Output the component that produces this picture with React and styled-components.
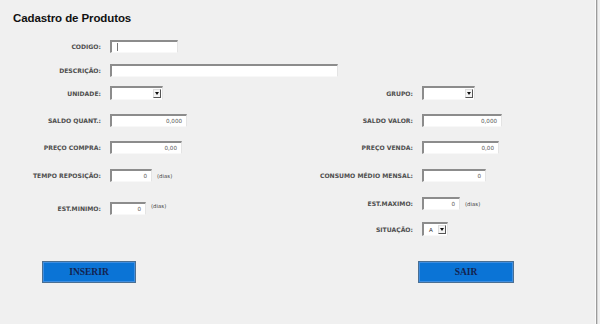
import React from "react";
import styled, { createGlobalStyle } from "styled-components";

const GlobalStyle = createGlobalStyle`
  html, body {
    margin: 0;
    padding: 0;
    background: #f0f0f0;
  }
`;

// Window frame
const Frame = styled.div`
  width: 595px;
  height: 324px;
  background: #f0f0f0;
  border-right: 1px solid #fbfbfb;
  box-shadow: 1px 0 0 #9c9c9c, 2px 0 0 #d4d4d4;
  font-family: "DejaVu Sans", Verdana, sans-serif;
  color: #3c3c3c;
  overflow: hidden;
  position: relative;
`;

const Title = styled.h1`
  margin: 0;
  padding: 12px 0 0 13px;
  height: 15px;
  font-family: "Liberation Sans", Arial, sans-serif;
  font-size: 11.5px;
  font-weight: 700;
  color: #111;
  letter-spacing: -0.1px;
`;

const Columns = styled.div`
  display: grid;
  grid-template-columns: 300px 1fr;
`;

const Column = styled.div`
  display: flex;
  flex-direction: column;
`;

const Row = styled.div`
  display: grid;
  grid-template-columns: ${(p) => p.$label}px auto;
  column-gap: 9px;
  align-items: center;
  height: 14px;
  margin-top: ${(p) => p.$top}px;
`;

const Label = styled.span`
  text-align: right;
  font-size: 6.1px;
  font-weight: 700;
  color: #4e4e4e;
  white-space: nowrap;
`;

const FieldLine = styled.div`
  display: flex;
  align-items: center;
  gap: 5px;
`;

const Input = styled.div`
  box-sizing: border-box;
  width: ${(p) => p.$w}px;
  height: 13px;
  background: #fff;
  border-top: 2px solid #8c8c8c;
  border-left: 2px solid #8c8c8c;
  border-right: 1px solid #e4e4e4;
  border-bottom: 1px solid #f8f8f8;
  display: flex;
  align-items: center;
  justify-content: ${(p) => (p.$left ? "flex-start" : "flex-end")};
  padding: 0 4px;
  font-size: 5.6px;
  color: #555;
`;

const Caret = styled.span`
  width: 1px;
  height: 8px;
  background: #777;
  margin-left: 1px;
`;

const Unit = styled.span`
  font-size: 5.4px;
  color: #444;
  margin-top: ${(p) => p.$up || 0}px;
`;

const Select = styled.div`
  box-sizing: border-box;
  width: ${(p) => p.$w}px;
  height: 14px;
  background: #fff;
  border-top: 2px solid #8c8c8c;
  border-left: 2px solid #8c8c8c;
  border-right: 1px solid #e4e4e4;
  border-bottom: 1px solid #f8f8f8;
  display: flex;
  align-items: center;
  justify-content: space-between;
  padding: 0 1px 0 5px;
  font-size: 5.6px;
  color: #333;
`;

const DropButton = styled.span`
  box-sizing: border-box;
  width: 8px;
  height: 9px;
  background: #f4f4f4;
  border-right: 1px solid #555;
  border-bottom: 1px solid #555;
  border-left: 1px solid #ddd;
  border-top: 1px solid #ddd;
  display: flex;
  align-items: center;
  justify-content: center;

  &::after {
    content: "";
    border-left: 2px solid transparent;
    border-right: 2px solid transparent;
    border-top: 3px solid #111;
  }
`;

const ButtonBar = styled.div`
  display: grid;
  grid-template-columns: 300px 1fr;
  margin-top: 24px;
`;

const Button = styled.button`
  box-sizing: border-box;
  width: ${(p) => p.$w}px;
  height: 22px;
  margin-left: ${(p) => p.$left}px;
  background: #0b74d6;
  border: 1px solid #4a6f93;
  box-shadow: inset 0 0 0 1px #3f8ee0;
  font-family: "Liberation Serif", "Times New Roman", serif;
  font-weight: 700;
  font-size: 9.5px;
  color: #14234f;
  padding: 0;
  cursor: pointer;
`;

const Field = ({ label, lw, top, w, value, unit, unitUp }) => (
  <Row $label={lw} $top={top}>
    <Label>{label}</Label>
    <FieldLine>
      <Input $w={w}>{value}</Input>
      {unit && <Unit $up={unitUp}>(dias)</Unit>}
    </FieldLine>
  </Row>
);

const Combo = ({ label, lw, top, w, value }) => (
  <Row $label={lw} $top={top}>
    <Label>{label}</Label>
    <Select $w={w}>
      <span>{value}</span>
      <DropButton />
    </Select>
  </Row>
);

export default function App() {
  return (
    <>
      <GlobalStyle />
      <Frame>
        <Title>Cadastro de Produtos</Title>

        <Row $label={101} $top={12}>
          <Label>CODIGO:</Label>
          <Input $w={68} $left>
            <Caret />
          </Input>
        </Row>
        <Field label="DESCRIÇÃO:" lw={101} top={10} w={228} value="" />

        <Columns>
          <Column>
            <Combo label="UNIDADE:" lw={101} top={9} w={53} value="" />
            <Field label="SALDO QUANT.:" lw={101} top={13} w={77} value="0,000" />
            <Field label="PREÇO COMPRA:" lw={101} top={13} w={72} value="0,00" />
            <Field label="TEMPO REPOSIÇÃO:" lw={101} top={14} w={42} value="0" unit unitUp={2} />
            <Field label="EST.MINIMO:" lw={101} top={19} w={36} value="0" unit unitUp={-4} />
          </Column>
          <Column>
            <Combo label="GRUPO:" lw={113} top={9} w={53} value="" />
            <Field label="SALDO VALOR:" lw={113} top={13} w={80} value="0,000" />
            <Field label="PREÇO VENDA:" lw={113} top={13} w={77} value="0,00" />
            <Field label="CONSUMO MÉDIO MENSAL:" lw={113} top={14} w={64} value="0" />
            <Field label="EST.MAXIMO:" lw={113} top={14} w={38} value="0" unit unitUp={2} />
            <Combo label="SITUAÇÃO:" lw={113} top={12} w={26} value="A" />
          </Column>
        </Columns>

        <ButtonBar>
          <div>
            <Button $w={94} $left={42}>INSERIR</Button>
          </div>
          <div>
            <Button $w={96} $left={118}>SAIR</Button>
          </div>
        </ButtonBar>
      </Frame>
    </>
  );
}
